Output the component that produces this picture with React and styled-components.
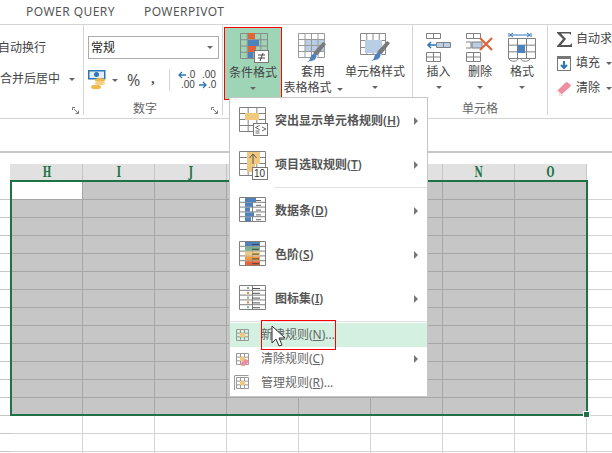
import React from "react";
import styled, { createGlobalStyle } from "styled-components";

const CJK = `"Noto Sans", "Noto Sans CJK SC", sans-serif`;
const GREEN = "#1f7246";
const LINE = "#808080";

const Global = createGlobalStyle`
  html, body { margin: 0; padding: 0; background: #fff; overflow: hidden; }
  #root { width: 612px; height: 453px; overflow: hidden; }
  * { box-sizing: border-box; }
`;
const Page = styled.div`
  position: relative; width: 612px; height: 453px; overflow: hidden;
  font: 12px/16px ${CJK}; color: #444; display: flex; flex-direction: column;
`;
const Tabs = styled.div`
  height: 24px; display: flex; gap: 29px; padding: 4px 0 0 26px; flex: none;
`;
const Tab = styled.span` font-size: 12px; line-height: 16px; letter-spacing: 0.45px; color: #555; `;
const Ribbon = styled.div`
  height: 95px; flex: none; display: flex; border-top: 1px solid #d4d4d4; border-bottom: 1px solid #d4d4d4;
`;
const Group = styled.section`
  position: relative; flex: none; width: ${p => p.$w}px; height: 90px; border-right: 1px solid #d4d4d4;
  display: flex; flex-direction: column;
  &:last-child { border-right: none; flex: 1; }
`;
const GroupBody = styled.div`
  height: 75px; flex: none; display: flex; flex-direction: ${p => p.$col ? "column" : "row"};
  align-items: flex-start; padding: ${p => p.$pad || "0"};
`;
const GroupLabel = styled.div` text-align: center; line-height: 16px; color: #666; margin-top: 1px; padding-right: ${p => p.$pr || 0}px; `;
const Launcher = styled.svg` position: absolute; right: 4px; bottom: 1px; width: 7px; height: 7px; `;
const SmallRow = styled.div`
  display: flex; align-items: center; white-space: nowrap; height: 18px; margin: ${p => p.$m || "0"}; color: #444;
`;
const Caret = styled.i`
  display: inline-block; flex: none; width: 0; height: 0; border: 3px solid transparent; border-top: 3px solid #666; border-bottom: 0;
  margin: ${p => p.$m || "0"};
`;
const Select = styled.div`
  width: 131px; height: 23px; border: 1px solid #ababab; display: flex; align-items: center; justify-content: space-between;
  padding: 0 5px 0 2px; color: #222; margin-bottom: 9px;
`;
const NumRow = styled.div` display: flex; align-items: center; height: 24px; width: 100%; `;
const Percent = styled.span` font-size: 16px; color: #555; margin-left: 9px; width: 15px; `;
const Comma = styled.span` font: bold 15px/16px "Liberation Serif", serif; color: #555; margin: -4px 0 0 9px; width: 10px; `;
const VSep = styled.i` width: 1px; height: 22px; background: #d4d4d4; margin: 0 7px 0 8px; `;
const TallBtn = styled.div`
  flex: none; width: ${p => p.$w}px; height: ${p => p.$active ? 73 : 71}px; display: flex; flex-direction: column; align-items: center;
  padding-top: ${p => p.$active ? 4 : 5}px; margin: ${p => p.$m || "0"}; line-height: 16px; white-space: nowrap; color: #444;
  ${p => p.$active ? "background:#9fd5b7;border:1px solid #f00;" : ""}
  svg { flex: none; display: block; }
`;
const BtnText = styled.div` height: 16px; margin-top: ${p => p.$mt ?? 0}px; `;
const BtnCaret = styled(Caret)` margin-top: 6px; `;
const InlineCaret = styled(Caret)` margin: 0 0 1px 5px; `;

const Sheet = styled.div` flex: none; padding-top: 32px; `;
const FormulaLine = styled.div` height: 2px; background: #c6c6c6; margin-bottom: 11px; `;
const GridRow = styled.div`
  display: grid; grid-template-columns: 11px repeat(8, 72px) 1fr; height: ${p => p.$h || 18}px;
`;
const Corner = styled.div` border-bottom: 1px solid #c6c6c6; `;
const Head = styled.div`
  background: #e1e1e1; border-right: 1px solid #c6c6c6; text-align: center;
  font: bold 14px/17px "DejaVu Serif Condensed", "DejaVu Serif", serif; color: ${GREEN};
  span { display: inline-block; transform: scaleX(0.72); }
  &:first-child { background: linear-gradient(to right, transparent 10px, #e1e1e1 10px); border: none; }
`;
const Cell = styled.div`
  border-right: 1px solid ${p => p.$sel ? "#a6a6a6" : "#d4d4d4"};
  border-bottom: 1px solid ${p => p.$sel ? "#a6a6a6" : "#d4d4d4"};
  background: ${p => p.$sel ? "#c6c6c6" : "#fff"};
  ${p => p.$active ? "background:#fff;" : ""}
`;
const Free = styled.div` border-bottom: 1px solid #d4d4d4; `;
const Body = styled.div` position: relative; `;
const Selection = styled.div`
  position: absolute; left: 10px; top: -2px; width: 578px; height: 236px; border: 2px solid ${GREEN};
`;
const Handle = styled.div`
  position: absolute; right: -4px; bottom: -4px; background: ${GREEN}; border: 1px solid #fff; box-sizing: content-box;
  width: 5px; height: 5px;
`;
const Menu = styled.div`
  position: absolute; left: 229px; top: 97px; width: 199px; height: 300px; background: #fff; border: 1px solid #c6c6c6; padding-top: 1px;
`;
const Item = styled.div`
  height: ${p => p.$small ? 24 : 44}px; display: flex; align-items: center; position: relative; white-space: nowrap;
  padding-left: ${p => p.$small ? 4 : 8}px;
  color: ${p => p.$small ? "#666" : "#555"};
  font-weight: ${p => p.$small ? 400 : 600};
  background: ${p => p.$hl ? "#d3f0e0" : "transparent"};
  svg { flex: none; }
`;
const ItemLabel = styled.span` margin-left: ${p => p.$small ? 11 : 7}px; u { text-underline-offset: 1px; } `;
const Arrow = styled.i`
  position: absolute; right: 9px; top: 50%; margin-top: -4px; width: 0; height: 0;
  border: 4px solid transparent; border-left: 4px solid #777; border-right: 0;
`;
const MenuSep = styled.div` height: 2px; padding-left: ${p => p.$inset || 0}px; &::after { content: ""; display: block; height: 1px; background: #e1e1e1; } `;
const RedBox = styled.div` position: absolute; left: 261px; top: 320px; width: 75px; height: 30px; border: 1px solid #f00; `;
const Cursor = styled.svg` position: absolute; left: 271px; top: 325px; `;

const G = ({ x, y, w, h, cols, rows, c = LINE }) => {
  const l = [];
  for (let i = 0; i <= cols; i++) l.push(<line key={"c" + i} x1={x + w * i / cols} x2={x + w * i / cols} y1={y} y2={y + h} stroke={c} />);
  for (let i = 0; i <= rows; i++) l.push(<line key={"r" + i} y1={y + h * i / rows} y2={y + h * i / rows} x1={x} x2={x + w} stroke={c} />);
  return <>{l}</>;
};
const Tip = () => <Launcher viewBox="0 0 7 7"><path d="M.5 3V.5H3M2 2l4 4M6.500 3.500v3h-3" fill="none" stroke="#777" /></Launcher>;

const CondIcon = () => (
  <svg width="32" height="32" viewBox="0 0 32 32">
    <G x={3.500} y={1.500} w={27} h={25} cols={4} rows={4} c="#8a8a8a" />
    <rect x="11" y="1" width="7" height="6" fill="#e0633a" /><rect x="11" y="8" width="11" height="6" fill="#4f81bd" />
    <rect x="11" y="14" width="8" height="6" fill="#e0633a" /><rect x="11" y="20" width="5" height="6" fill="#4f81bd" />
    <rect x="17.500" y="18.500" width="14" height="12" fill="#fff" stroke="#777" />
    <path d="M21 23h7M21 26h7M26 21l-3 8" stroke="#444" fill="none" />
  </svg>
);
const Brush = ({ dx = 0, dy = 0 }) => (
  <g transform={`translate(${dx} ${dy})`}>
    <path d="M18 19L28 8l3 2-9 12z" fill="#7a7a7a" />
    <path d="M22 20c1 4-2 8-10 8 3-1 3-4 4-6 2-3 5-3 6-2z" fill="#4f81bd" />
    <path d="M14 28c5-1 8-2 8-7" fill="none" stroke="#fff" />
  </g>
);
const TableIcon = () => (
  <svg width="34" height="32" viewBox="0 0 34 32">
    <rect x="9" y="7" width="19" height="13" fill="#b9cde5" />
    <G x={2.500} y={1.500} w={26} h={24} cols={4} rows={4} c="#9a9a9a" />
    <Brush dx={-1} dy={2} />
  </svg>
);
const CellStyleIcon = () => (
  <svg width="32" height="32" viewBox="0 0 32 32">
    <G x={1.500} y={1.500} w={25} h={21} cols={4} rows={3} c="#8a8a8a" />
    <rect x="6" y="8" width="17" height="13" fill="#b9cde5" />
    <Brush dy={1} />
  </svg>
);
const InsertIcon = () => (
  <svg width="32" height="32" viewBox="0 0 32 32">
    <G x={3.500} y={1.500} w={14} h={5} cols={2} rows={1} />
    <rect x="14" y="11" width="13" height="4" fill="#b9cde5" />
    <G x={13.500} y={10.500} w={14} h={5} cols={2} rows={1} />
    <path d="M13 13H5M8 10l-3 3 3 3" stroke="#2e75b6" strokeWidth="1.500" fill="none" />
    <G x={3.500} y={20.500} w={14} h={9} cols={2} rows={2} />
  </svg>
);
const DeleteIcon = () => (
  <svg width="32" height="32" viewBox="0 0 32 32">
    <G x={2.500} y={1.500} w={14} h={5} cols={2} rows={1} />
    <rect x="8" y="10" width="10" height="6" fill="#b9cde5" stroke={LINE} />
    <path d="M2 10h5v6H2" fill="none" stroke={LINE} />
    <G x={2.500} y={20.500} w={14} h={9} cols={2} rows={2} />
    <path d="M16 6l12 12M28 6L16 18" stroke="#e0633a" strokeWidth="2.200" fill="none" />
  </svg>
);
const FormatIcon = () => (
  <svg width="32" height="32" viewBox="0 0 32 32">
    <path d="M3 1v4M25 1v4M4 3h20M7 1L4 3l3 2M21 1l3 2-3 2" stroke="#2e75b6" fill="none" />
    <G x={2.500} y={6.500} w={27} h={20} cols={3} rows={3} />
    <rect x="11" y="13" width="8" height="8" fill="#4f81bd" />
    <path d="M3 27c2 3 8 3 9 0M15 27c1 3 7 3 9 0" fill="none" stroke={LINE} />
  </svg>
);
const Sigma = () => <svg width="17" height="17" viewBox="0 0 17 17"><path d="M1 1h14v3l-1.500-1.500H5L10 8l-5 6h9l2-2v4H1v-1l6-7L1 2z" fill="#555" /></svg>;
const Fill = () => (
  <svg width="17" height="17" viewBox="0 0 17 17">
    <rect x="1.500" y="1.500" width="13" height="14" fill="#fff" stroke="#777" /><rect x="1" y="1" width="14" height="3" fill="#777" />
    <path d="M8 6v7M5 10l3 3 3-3" stroke="#2e75b6" strokeWidth="2" fill="none" />
  </svg>
);
const Eraser = () => (
  <svg width="17" height="17" viewBox="0 0 17 17"><path d="M1 11l8-8 2-1 4 3-1 2-8 7H4z" fill="#ee8ea0" /><path d="M1.500 11l4 3.500" stroke="#fff" /><path d="M3 15h4" stroke="#ccc" /></svg>
);
const Money = () => (
  <svg width="19" height="22" viewBox="0 0 19 22">
    <rect x="0.750" y="1.750" width="16" height="8" fill="#e4edf6" stroke="#2e75b6" strokeWidth="1.500" />
    <circle cx="8.500" cy="5.500" r="2.500" fill="#2e75b6" />
    <ellipse cx="12" cy="11" rx="5" ry="2" fill="#f0b94b" /><ellipse cx="12" cy="14" rx="5" ry="2" fill="#f4cf85" /><ellipse cx="8" cy="18" rx="5" ry="2.200" fill="#f0b94b" />
  </svg>
);
const DecText = styled.text` font: 10px "Liberation Sans", sans-serif; fill: #444; `;
const IncDec = () => (
  <svg width="20" height="20" viewBox="0 0 20 20">
    <path d="M9 5H2M5 2L2 5l3 3" stroke="#2e75b6" strokeWidth="1.300" fill="none" />
    <DecText x="10" y="8">.0</DecText><DecText x="4" y="18">.00</DecText>
  </svg>
);
const DecDec = () => (
  <svg width="20" height="20" viewBox="0 0 20 20">
    <DecText x="4" y="8">.00</DecText><DecText x="10" y="18">.0</DecText>
    <path d="M1 15h7M5 12l3 3-3 3" stroke="#2e75b6" strokeWidth="1.300" fill="none" />
  </svg>
);

const NumTen = styled.text` font: 10px "Liberation Sans", sans-serif; fill: #333; `;
const BigGrid = ({ children, cols = 3, rows = 4 }) => (
  <svg width="30" height="30" viewBox="0 0 30 30"><G x={1.500} y={1.500} w={26} h={24} cols={cols} rows={rows} />{children}</svg>
);
const HighlightIcon = () => (
  <BigGrid>
    <rect x="7" y="7" width="14" height="7" fill="#f0c97f" />
    <rect x="15.500" y="17.500" width="14" height="12" fill="#fff" stroke="#777" />
    <path d="M21.500 19.500l-4 2 4 2M17.500 25h4M17.500 27h4M24 21l4 2-4 2" stroke="#444" fill="none" strokeWidth=".8" />
  </BigGrid>
);
const TopIcon = () => (
  <BigGrid>
    <rect x="9" y="2" width="13" height="12" fill="#f0c97f" /><rect x="9" y="14" width="8" height="8" fill="#f0c97f" />
    <path d="M15 14V4M11.500 8L15 4l3.500 4" stroke="#555" fill="none" />
    <rect x="14.500" y="17.500" width="15" height="12" fill="#fff" stroke="#777" />
    <NumTen x="16" y="27">10</NumTen>
  </BigGrid>
);
const BarsIcon = () => (
  <BigGrid cols={2} rows={5}>
    {[11, 8, 5, 9, 6].map((w, i) => <React.Fragment key={i}><rect x="7" y={2 + i * 4.800} width={w} height="4" fill="#4f81bd" /><rect x="18" y={4 + i * 4.800} width="5" height="1" fill="#666" /></React.Fragment>)}
  </BigGrid>
);
const ScaleIcon = () => (
  <BigGrid cols={2} rows={5}>
    {["#4f81bd", "#7fb08f", "#f0c97f", "#ed9a45", "#e0633a"].map((c, i) => <React.Fragment key={c}><rect x="7" y={2 + i * 4.800} width="15" height="4" fill={c} /><rect x="14" y={4 + i * 4.800} width="7" height="1" fill="#444" /></React.Fragment>)}
  </BigGrid>
);
const IconSetIcon = () => (
  <BigGrid cols={2} rows={5}>
    {["#7fb08f", "#ed7d31", "#7fb08f", "#ed7d31", "#7fb08f"].map((c, i) => <React.Fragment key={i}><rect x="9" y={3 + i * 4.800} width="2" height="2" fill={c} /><rect x="14" y={4 + i * 4.800} width="8" height="1" fill="#555" /></React.Fragment>)}
  </BigGrid>
);
const SmallBase = ({ children }) => (
  <svg width="16" height="16" viewBox="0 0 16 16"><G x={2.500} y={2.500} w={12} h={11} cols={3} rows={3} c="#999" /><rect x="6" y="6" width="5" height="4" fill="#f0c97f" />{children}</svg>
);
const ClearIcon = () => <SmallBase><path d="M6 13l5-5 3 1 1 2-5 4H8z" fill="#ee8ea0" /></SmallBase>;
const ManageIcon = () => <SmallBase><path d="M.5 1v14M.5 .5h14" stroke="#999" fill="none" /></SmallBase>;

const COLS = ["H", "I", "J", "K", "L", "M", "N", "O"];
const menuTop = [
  [HighlightIcon, "突出显示单元格规则", "H"], [TopIcon, "项目选取规则", "T"],
];
const menuMid = [[BarsIcon, "数据条", "D"], [ScaleIcon, "色阶", "S"], [IconSetIcon, "图标集", "I"]];
const Big = ([Icon, t, k]) => <Item key={k}><Icon /><ItemLabel>{t}(<u>{k}</u>)</ItemLabel><Arrow /></Item>;
const IconGap = styled.span` margin-left: 3px; `;
const Spacer = styled.span` width: 1px; `;

export default function App() {
  return (
    <Page>
      <Global />
      <Tabs><Tab>POWER QUERY</Tab><Tab>POWERPIVOT</Tab></Tabs>
      <Ribbon>
        <Group $w={84}>
          <GroupBody $col $pad="14px 0 0 0">
            <SmallRow $m="0 0 13px -2px">自动换行</SmallRow>
            <SmallRow>合并后居中<Caret $m="0 0 0 9px" /></SmallRow>
          </GroupBody>
          <Tip />
        </Group>
        <Group $w={139}>
          <GroupBody $col $pad="11px 4px 0 4px">
            <Select>常规<Caret /></Select>
            <NumRow>
              <Money /><Caret $m="0 0 0 5px" /><Percent>%</Percent><Comma>,</Comma><VSep /><IncDec /><Spacer /><DecDec />
            </NumRow>
          </GroupBody>
          <GroupLabel $pr={16}>数字</GroupLabel>
          <Tip />
        </Group>
        <Group $w={190}>
          <GroupBody $pad="2px 0 0 1px">
            <TallBtn $w={58} $active><CondIcon /><BtnText $mt={1}>条件格式</BtnText><BtnCaret /></TallBtn>
            <TallBtn $w={60} $m="0 0 0 1px"><TableIcon /><BtnText>套用</BtnText><BtnText>表格格式<InlineCaret /></BtnText></TallBtn>
            <TallBtn $w={70} $m="0 0 0 -3px"><CellStyleIcon /><BtnText>单元格样式</BtnText><BtnCaret /></TallBtn>
          </GroupBody>
        </Group>
        <Group $w={135}>
          <GroupBody $pad="2px 0 0 5px">
            <TallBtn $w={41}><InsertIcon /><BtnText>插入</BtnText><BtnCaret /></TallBtn>
            <TallBtn $w={42}><DeleteIcon /><BtnText>删除</BtnText><BtnCaret /></TallBtn>
            <TallBtn $w={42}><FormatIcon /><BtnText>格式</BtnText><BtnCaret /></TallBtn>
          </GroupBody>
          <GroupLabel>单元格</GroupLabel>
        </Group>
        <Group $w={64}>
          <GroupBody $col $pad="5px 0 0 8px">
            <SmallRow $m="0 0 6px"><Sigma /><IconGap>自动求和</IconGap></SmallRow>
            <SmallRow $m="0 0 7px"><Fill /><IconGap>填充</IconGap><Caret $m="0 0 0 6px" /></SmallRow>
            <SmallRow><Eraser /><IconGap>清除</IconGap><Caret $m="0 0 0 6px" /></SmallRow>
          </GroupBody>
        </Group>
      </Ribbon>
      <Sheet>
        <FormulaLine />
        <GridRow $h={18}>
          <Head />
          {COLS.map(c => <Head key={c}><span>{c}</span></Head>)}
        </GridRow>
        <Body>
          {Array.from({ length: 16 }, (_, r) => (
            <GridRow key={r}>
              <Corner />
              {COLS.map((c, i) => <Cell key={c} $sel={r < 13} $active={r === 0 && i === 0} />)}
              <Free />
            </GridRow>
          ))}
          <Selection><Handle /></Selection>
        </Body>
      </Sheet>
      <Menu>
        {menuTop.map(Big)}
        <MenuSep $inset={44} />
        {menuMid.map(Big)}
        <MenuSep />
        <Item $small $hl><SmallBase /><ItemLabel $small>新建规则(<u>N</u>)...</ItemLabel></Item>
        <Item $small><ClearIcon /><ItemLabel $small>清除规则(<u>C</u>)</ItemLabel><Arrow /></Item>
        <Item $small><ManageIcon /><ItemLabel $small>管理规则(<u>R</u>)...</ItemLabel></Item>
      </Menu>
      <RedBox />
      <Cursor width="16" height="24" viewBox="0 0 16 24">
        <path d="M1 1v17l4-4 3 7 3-1-3-7h6z" fill="#fff" stroke="#333" />
      </Cursor>
    </Page>
  );
}
